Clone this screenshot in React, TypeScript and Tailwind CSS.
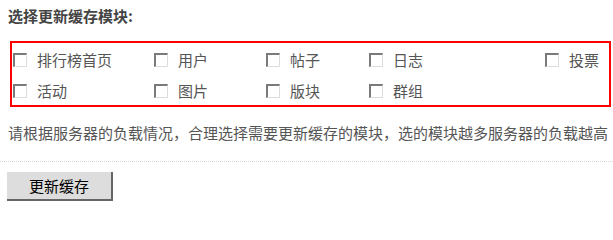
import React from "react";

const Box = () => (
  <span className="box-border inline-block w-[14px] h-[14px] shrink-0 bg-white border-t-2 border-l-2 border-b border-r border-t-[#7a7a7a] border-l-[#7a7a7a] border-b-[#dcdcdc] border-r-[#dcdcdc]" />
);

const Item = ({ label }: { label: string }) => (
  <label className="flex items-center h-[31px]">
    <Box />
    <span className="ml-[10px] text-[15px] text-[#555] leading-[20px]">{label}</span>
  </label>
);

export default function App() {
  const row1 = ["排行榜首页", "用户", "帖子", "日志", "投票"];
  const row2 = ["活动", "图片", "版块", "群组", ""];
  const font = { fontFamily: '"Noto Sans CJK SC", "Noto Sans", sans-serif' };
  return (
    <div className="w-[613px] h-[206px] bg-white relative" style={font}>
      <div className="pt-[6px] pl-[8px] text-[15px] font-bold text-[#444] leading-[20px]">
        选择更新缓存模块:
      </div>
      <div className="box-border ml-[10px] mt-[15px] w-[601px] h-[66px] border-2 border-[#ff0000] pt-[1px] pl-[1px]">
        <div className="grid grid-cols-[141px_112px_103px_176px_1fr]">
          {row1.map((l) => (
            <Item key={l} label={l} />
          ))}
          {row2.map((l, i) =>
            l ? <Item key={l} label={l} /> : <div key={i} />
          )}
        </div>
      </div>
      <div className="pl-[8px] mt-[15px] text-[15px] text-[#555] leading-[22px] whitespace-nowrap">
        请根据服务器的负载情况，合理选择需要更新缓存的模块，选的模块越多服务器的负载越高
      </div>
      <div className="mt-[17px] border-t border-dotted border-[#d8d8d8]" />
      <div className="pl-[7px] mt-[10px]">
        <button className="box-border w-[106px] h-[29px] bg-[#dddddd] border-r-2 border-b-2 border-[#666] text-[15px] text-black leading-none">
          更新缓存
        </button>
      </div>
    </div>
  );
}
